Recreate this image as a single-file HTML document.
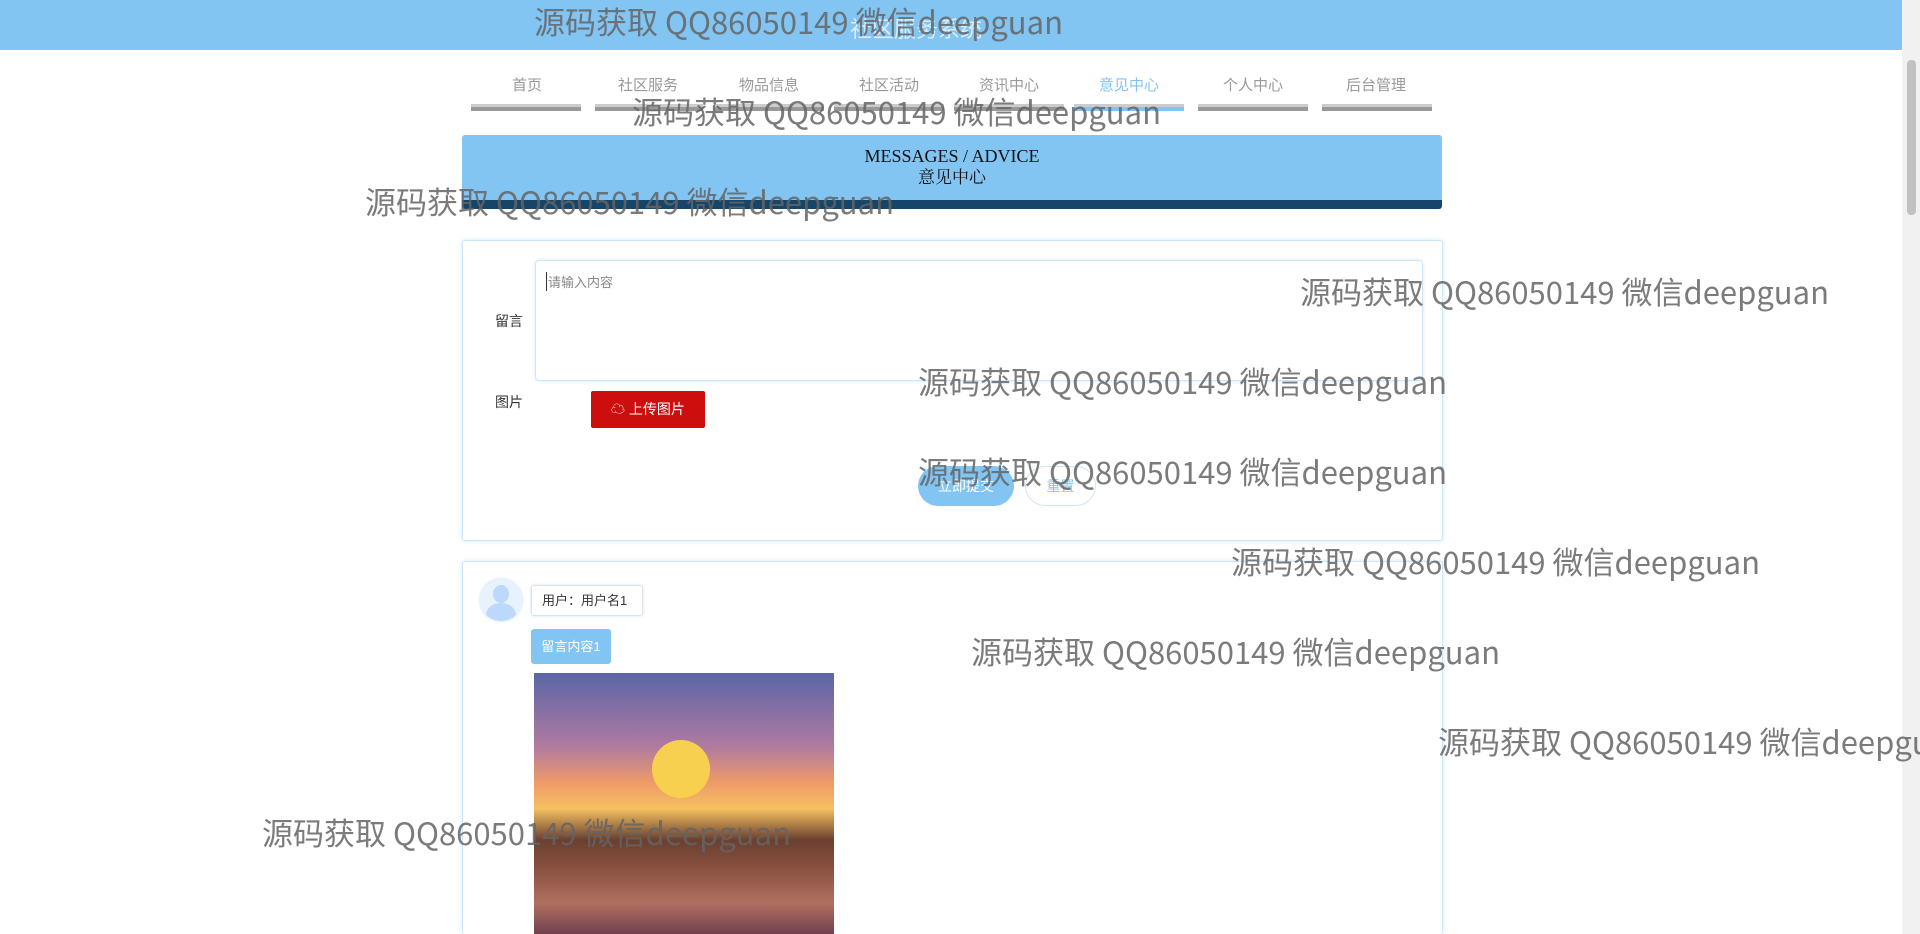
<!DOCTYPE html>
<html style="width:1920px;height:934px;overflow:hidden"><head><meta charset="utf-8"><style>
*{margin:0;padding:0;box-sizing:border-box}
body{width:1920px;height:934px;overflow:hidden;background:#fff;font-family:"Liberation Sans","Noto Sans CJK SC",sans-serif;position:relative}
.abs{position:absolute}
.hdr{left:0;top:0;width:1902px;height:50px;background:#82c4f2}
.nav{top:74px;font-size:15px;color:#999;text-align:center;width:110px}
.bar{top:104px;height:7px;background:linear-gradient(#ccc 0,#ccc 40%,#999 40%)}
.wm{font-family:"Noto Sans CJK SC","WenQuanYi Zen Hei",sans-serif;font-size:31px;color:rgba(100,100,100,.85);white-space:nowrap;line-height:36px}
.card{border:1px solid #cde6fa;box-shadow:0 0 6px #d6ebfb;border-radius:3px;background:#fff}
</style></head><body>
<div class="abs hdr"></div>
<div class="abs" style="left:850px;top:12px;font-size:22px;color:rgba(255,255,255,.7)">社区服务系统</div>
<div class="abs" style="left:1902px;top:0;width:18px;height:934px;background:#f1f1f1"></div>
<div class="abs" style="left:1907px;top:60px;width:9px;height:155px;background:#c1c1c1;border-radius:4px"></div>

<div class="abs nav" style="left:472px">首页</div>
<div class="abs nav" style="left:593px">社区服务</div>
<div class="abs nav" style="left:714px">物品信息</div>
<div class="abs nav" style="left:834px">社区活动</div>
<div class="abs nav" style="left:954px">资讯中心</div>
<div class="abs nav" style="left:1074px;color:#82c4f2">意见中心</div>
<div class="abs nav" style="left:1198px">个人中心</div>
<div class="abs nav" style="left:1321px">后台管理</div>
<div class="abs bar" style="left:471px;width:110px"></div>
<div class="abs bar" style="left:595px;width:108px"></div>
<div class="abs bar" style="left:714px;width:110px"></div>
<div class="abs bar" style="left:834px;width:110px"></div>
<div class="abs bar" style="left:954px;width:110px"></div>
<div class="abs bar" style="left:1074px;width:110px;background:linear-gradient(#ccc 0,#ccc 40%,#82c4f2 40%)"></div>
<div class="abs bar" style="left:1198px;width:110px"></div>
<div class="abs bar" style="left:1322px;width:110px"></div>

<div class="abs" style="left:462px;top:135px;width:980px;height:74px;background:#82c4f2;border-bottom:9px solid #16456a;border-radius:3px;text-align:center;font-family:'Liberation Serif','Noto Serif CJK SC',serif;color:#111">
<div style="font-size:18px;margin-top:10px;line-height:22px">MESSAGES / ADVICE</div>
<div style="font-size:17px;line-height:22px">意见中心</div></div>

<div class="abs card" style="left:462px;top:240px;width:981px;height:301px"></div>
<div class="abs" style="left:535px;top:260px;width:888px;height:121px;border:1px solid #cde6fa;border-radius:4px;box-shadow:0 0 4px #d6ebfb"></div>
<div class="abs" style="left:546px;top:272px;font-size:13px;color:#888;border-left:1px solid #333;padding-left:1px">请输入内容</div>
<div class="abs" style="left:495px;top:311px;font-size:14px;color:#333">留言</div>
<div class="abs" style="left:495px;top:392px;font-size:14px;color:#333">图片</div>
<div class="abs" style="left:591px;top:391px;width:114px;height:37px;background:#cc0e0e;border-radius:2px;color:#fff;font-size:14px;line-height:37px;text-align:center">☁ 上传图片</div>
<div class="abs" style="left:918px;top:466px;width:96px;height:40px;background:#82c4f2;border-radius:20px;color:#fff;font-size:14px;line-height:40px;text-align:center">立即提交</div>
<div class="abs" style="left:1025px;top:466px;width:71px;height:40px;border:1px solid #cde6fa;border-radius:20px;color:#82c4f2;font-size:14px;line-height:38px;text-align:center">重置</div>

<div class="abs card" style="left:462px;top:561px;width:981px;height:373px;border-bottom:none"></div>
<div class="abs" style="left:480px;top:579px;width:42px;height:42px;border-radius:50%;background:#e8f2fd;box-shadow:0 0 3px #bcd9f7;overflow:hidden">
<div class="abs" style="left:13px;top:6px;width:16px;height:18px;border-radius:50%;background:#bcd8fb"></div>
<div class="abs" style="left:6px;top:24px;width:30px;height:24px;border-radius:50%;background:#bcd8fb"></div></div>
<div class="abs" style="left:531px;top:585px;width:112px;height:31px;border:1px solid #e2e2e2;border-radius:3px;box-shadow:0 0 3px #cde6fa;font-size:13px;line-height:29px;padding-left:10px;color:#333">用户：用户名1</div>
<div class="abs" style="left:531px;top:629px;width:80px;height:35px;background:#82c4f2;border-radius:3px;color:#fff;font-size:13px;line-height:35px;text-align:center">留言内容1</div>
<div class="abs" style="left:534px;top:673px;width:300px;height:261px;overflow:hidden;background:linear-gradient(180deg,#5a66a6 0%,#b07aa0 28%,#f09a68 42%,#f4c060 52%,#6a4030 64%,#8a5040 75%,#b07060 88%,#704050 100%)">
<div class="abs" style="left:118px;top:67px;width:58px;height:58px;border-radius:50%;background:#f8d050"></div></div>

<div class="abs wm" style="left:534px;top:3px">源码获取 QQ86050149 微信deepguan</div>
<div class="abs wm" style="left:632px;top:93px">源码获取 QQ86050149 微信deepguan</div>
<div class="abs wm" style="left:365px;top:183px">源码获取 QQ86050149 微信deepguan</div>
<div class="abs wm" style="left:1300px;top:273px">源码获取 QQ86050149 微信deepguan</div>
<div class="abs wm" style="left:918px;top:363px">源码获取 QQ86050149 微信deepguan</div>
<div class="abs wm" style="left:918px;top:453px">源码获取 QQ86050149 微信deepguan</div>
<div class="abs wm" style="left:1231px;top:543px">源码获取 QQ86050149 微信deepguan</div>
<div class="abs wm" style="left:971px;top:633px">源码获取 QQ86050149 微信deepguan</div>
<div class="abs wm" style="left:1438px;top:723px">源码获取 QQ86050149 微信deepguan</div>
<div class="abs wm" style="left:262px;top:814px">源码获取 QQ86050149 微信deepguan</div>
</body></html>
